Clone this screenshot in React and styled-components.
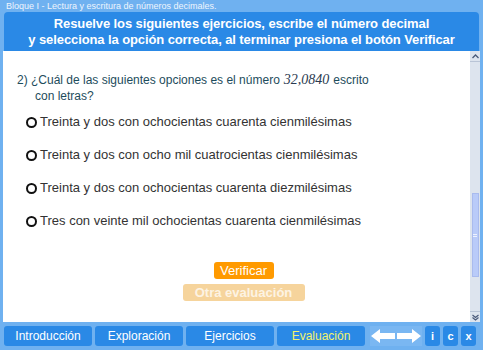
import React from "react";
import styled, { createGlobalStyle } from "styled-components";

const Global = createGlobalStyle`
  html, body { margin: 0; padding: 0; }
  body { font-family: "Liberation Sans", Arial, sans-serif; background: #6fb1f0; }
`;

const Frame = styled.div`
  width: 483px;
  height: 350px;
  background: #6fb1f0;
  display: flex;
  flex-direction: column;
  overflow: hidden;
`;

const Crumb = styled.div`
  height: 12px;
  padding-left: 6px;
  font-size: 9px;
  line-height: 12px;
  color: #eef5fd;
`;

const TitleBox = styled.div`
  margin: 0 4px 0 4px;
  height: 39px;
  background: #2a89e6;
  border-radius: 4px 4px 0 0;
  color: #fff;
  font-weight: bold;
  font-size: 13px;
  letter-spacing: -0.1px;
  line-height: 16px;
  text-align: center;
  display: flex;
  flex-direction: column;
  justify-content: center;
`;

const Body = styled.div`
  margin: 0 3px 0 3px;
  height: 271px;
  display: flex;
  background: #fff;
`;

const Content = styled.div`
  flex: 1;
  padding: 21px 0 0 14px;
  display: flex;
  flex-direction: column;
`;

const Question = styled.div`
  font-size: 12px;
  line-height: 16px;
  color: #1d4c5c;
  padding-left: 18px;
  text-indent: -18px;
`;

const Num = styled.span`
  font-family: "Liberation Serif", "Times New Roman", serif;
  font-style: italic;
  font-size: 14px;
  color: #2a3a50;
  margin: 0 4px;
`;

const Options = styled.div`
  display: flex;
  flex-direction: column;
  gap: 17px;
  margin: 10px 0 0 9px;
`;

const Option = styled.label`
  display: flex;
  align-items: center;
  gap: 3px;
  font-size: 13px;
  line-height: 16px;
  color: #333;
`;

const Radio = styled.span`
  width: 7px;
  height: 7px;
  border: 2px solid #111;
  border-radius: 50%;
`;

const Actions = styled.div`
  display: flex;
  flex-direction: column;
  align-items: center;
  gap: 5px;
  margin-top: 33px;
`;

const Btn = styled.div`
  background: ${(p) => (p.$faded ? "#f6d49c" : "#ff9a00")};
  color: ${(p) => (p.$faded ? "#fdf3e3" : "#fff")};
  font-weight: ${(p) => (p.$faded ? "bold" : "normal")};
  font-size: 13px;
  line-height: 17px;
  border-radius: 3px;
  padding: 0 ${(p) => (p.$faded ? "12px" : "5px")};
  min-width: ${(p) => (p.$faded ? "98px" : "50px")};
  text-align: center;
`;

const Scroll = styled.div`
  width: 10px;
  background: #dde4ee;
  display: flex;
  flex-direction: column;
  align-items: center;
`;

const Arrow = styled.div`
  width: 10px;
  height: 10px;
  display: flex;
  align-items: center;
  justify-content: center;
  border-${(p) => (p.$down ? "top" : "bottom")}: 1px solid #b9c4d6;
`;

const Thumb = styled.div`
  width: 7px;
  height: 84px;
  margin-top: ${(p) => p.$top}px;
  background: #b9cbf9;
  border: 1px solid #a9bbee;
  box-sizing: border-box;
  display: flex;
  flex-direction: column;
  align-items: center;
  justify-content: center;
  gap: 1px;
`;

const Grip = styled.span`
  width: 4px;
  height: 1px;
  background: #eef3ff;
`;

const Spacer = styled.div`
  flex: 1;
`;

const Nav = styled.div`
  display: flex;
  align-items: center;
  gap: 3px;
  padding: 4px 0 0 4px;
`;

const Tab = styled.div`
  width: 88px;
  height: 20px;
  border-radius: 3px;
  background: #2a89e6;
  color: ${(p) => (p.$active ? "#f4f36a" : "#fff")};
  font-size: 12px;
  line-height: 20px;
  text-align: center;
`;

const Arrows = styled.div`
  display: flex;
  margin-left: 2px;
`;

const ArrowBox = styled.div`
  width: 26px;
  height: 20px;
  background: #7ab7f2;
  display: flex;
  align-items: center;
  justify-content: center;
`;

const Small = styled.div`
  width: 15px;
  height: 20px;
  border-radius: 3px;
  background: #2a89e6;
  color: #fff;
  font-size: 11px;
  font-weight: bold;
  line-height: 20px;
  text-align: center;
`;

const options = [
  "Treinta y dos con ochocientas cuarenta cienmilésimas",
  "Treinta y dos con ocho mil cuatrocientas cienmilésimas",
  "Treinta y dos con ochocientas cuarenta diezmilésimas",
  "Tres con veinte mil ochocientas cuarenta cienmilésimas",
];

const BigArrow = ({ left }) => (
  <svg width="26" height="16" viewBox="0 0 26 16">
    <path
      d={left ? "M1 8 L10 1 L10 5 L25 5 L25 11 L10 11 L10 15 Z" : "M25 8 L16 1 L16 5 L1 5 L1 11 L16 11 L16 15 Z"}
      fill="#fff"
    />
  </svg>
);

export default function App() {
  return (
    <>
      <Global />
      <Frame>
        <Crumb>Bloque I - Lectura y escritura de números decimales.</Crumb>
        <TitleBox>
          <div>Resuelve los siguientes ejercicios, escribe el número decimal</div>
          <div>y selecciona la opción correcta, al terminar presiona el botón Verificar</div>
        </TitleBox>
        <Body>
          <Content>
            <Question>
              2) ¿Cuál de las siguientes opciones es el número<Num>32,0840</Num>escrito
              <br />
              con letras?
            </Question>
            <Options>
              {options.map((o) => (
                <Option key={o}>
                  <Radio />
                  {o}
                </Option>
              ))}
            </Options>
            <Actions>
              <Btn>Verificar</Btn>
              <Btn $faded>Otra evaluación</Btn>
            </Actions>
          </Content>
          <Scroll>
            <Arrow>
              <svg width="7" height="5" viewBox="0 0 7 5">
                <path d="M0.5 4 L3.5 1 L6.5 4" stroke="#4a5a7a" strokeWidth="1.3" fill="none" />
              </svg>
            </Arrow>
            <Thumb $top={131}>
              <Grip />
              <Grip />
            </Thumb>
            <Spacer />
            <Arrow $down>
              <svg width="7" height="7" viewBox="0 0 7 7">
                <path d="M0.5 1 L3.5 3.5 L6.5 1 M0.5 3.5 L3.5 6 L6.5 3.5" stroke="#4a5a7a" strokeWidth="1.2" fill="none" />
              </svg>
            </Arrow>
          </Scroll>
        </Body>
        <Nav>
          <Tab>Introducción</Tab>
          <Tab>Exploración</Tab>
          <Tab>Ejercicios</Tab>
          <Tab $active>Evaluación</Tab>
          <Arrows>
            <ArrowBox>
              <BigArrow left />
            </ArrowBox>
            <ArrowBox>
              <BigArrow />
            </ArrowBox>
          </Arrows>
          <Small>i</Small>
          <Small>c</Small>
          <Small>x</Small>
        </Nav>
      </Frame>
    </>
  );
}
